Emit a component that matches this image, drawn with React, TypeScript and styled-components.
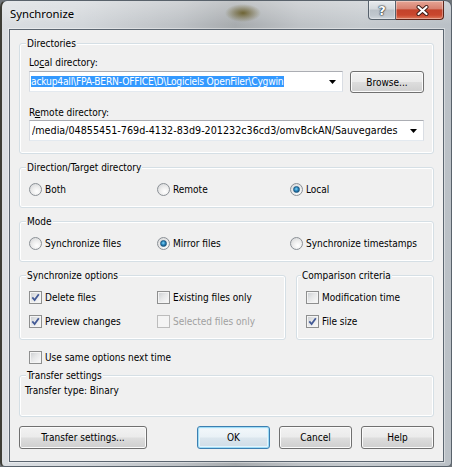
import React from "react";
import styled, { createGlobalStyle } from "styled-components";

const Global = createGlobalStyle`
  html, body { margin: 0; padding: 0; background: #6f7479; }
  body { font-family: "DejaVu Sans Condensed", "DejaVu Sans", sans-serif; }
`;

const Window = styled.div`
  box-sizing: border-box;
  width: 452px;
  height: 467px;
  display: flex;
  flex-direction: column;
  border: 1px solid #59626b;
  border-left: 2px solid #3d3d36;
  border-radius: 7px 7px 5px 5px;
  padding: 0 7px 4px 7px;
  background:
    radial-gradient(ellipse 18px 9px at 241px 12px, rgba(92, 78, 18, 0.8), rgba(92, 78, 18, 0) 100%),
    linear-gradient(180deg, rgba(255, 255, 255, 0.3) 0, rgba(255, 255, 255, 0) 24px),
    linear-gradient(90deg, #dadee2 0%, #d2d6da 18%, #bcc0c4 40%, #a7abae 52%, #bec2c6 66%, #c5cace 80%, #bac0c6 100%);
`;

const TitleBar = styled.div`
  flex: none;
  height: 28px;
  display: flex;
  align-items: flex-start;
  padding-left: 1px;
`;

const TitleText = styled.span`
  flex: 1;
  margin-top: 6px;
  font-family: "Noto Sans", "Liberation Sans", sans-serif;
  font-size: 11.3px;
  line-height: 14px;
  color: #000;
  text-shadow: 0 0 6px rgba(255, 255, 255, 0.9);
`;

const CaptionButtons = styled.div`
  display: flex;
`;

const CaptionButton = styled.div<{ $close?: boolean }>`
  box-sizing: border-box;
  height: 19px;
  width: ${(p) => (p.$close ? 48 : 28)}px;
  display: flex;
  align-items: center;
  justify-content: center;
  padding-left: ${(p) => (p.$close ? 5 : 0)}px;
  border: 1px solid ${(p) => (p.$close ? "#5c2419" : "#56616c")};
  border-top: none;
  ${(p) => (p.$close ? "border-left: none;" : "")}
  border-radius: ${(p) => (p.$close ? "0 0 4px 0" : "0 0 0 4px")};
  box-shadow: inset 0 0 0 1px rgba(255, 255, 255, 0.35);
  background: ${(p) =>
    p.$close
      ? "linear-gradient(180deg, #e6a595 0%, #d88170 42%, #c3432b 50%, #c9472e 78%, #de7a5c 100%)"
      : "linear-gradient(180deg, #e8ebee 0%, #d3d8dc 45%, #b9c0c7 50%, #c0c7ce 80%, #cfd5db 100%)"};
`;

const HelpGlyph = styled.span`
  font-family: "DejaVu Sans", sans-serif;
  font-weight: bold;
  font-size: 13px;
  line-height: 13px;
  color: #fff;
  text-shadow: 0 0 1px #1d2730, 0 0 1px #1d2730, 0 0 2px #1d2730;
`;

const Client = styled.div`
  flex: 1;
  display: flex;
  flex-direction: column;
  background: #f0f0f0;
  border: 1px solid #5b6570;
  box-shadow: 0 0 0 1px rgba(255, 255, 255, 0.4);
  padding: 7px 9px 0 9px;
  color: #000;
  font-family: "DejaVu Sans Condensed", "DejaVu Sans", sans-serif;
  font-stretch: condensed;
  font-size: 10px;
  line-height: 13px;
`;

const Group = styled.section<{ $mt?: number }>`
  display: flex;
  flex-direction: column;
  margin-top: ${(p) => p.$mt ?? 0}px;
  min-width: 0;
`;

const Caption = styled.div<{ $inset?: number }>`
  align-self: flex-start;
  position: relative;
  z-index: 1;
  margin: 0 0 -7px ${(p) => p.$inset ?? 7}px;
  padding: 0 1px;
  line-height: 13px;
  background: #f0f0f0;
`;

const Frame = styled.div<{ $pad: string }>`
  border: 1px solid #d5dfe5;
  border-radius: 3px;
  box-shadow: inset 0 0 0 1px #fff;
  padding: ${(p) => p.$pad};
`;

const FieldLabel = styled.div<{ $mt?: number; $mb?: number }>`
  margin: ${(p) => p.$mt ?? 0}px 0 ${(p) => p.$mb ?? 0}px 0;
  line-height: 13px;
`;

const Mnemonic = styled.span`
  text-decoration: underline;
`;

const ComboRow = styled.div`
  display: flex;
  align-items: flex-start;
  gap: 7px;
`;

const Combo = styled.div<{ $padLeft?: number }>`
  box-sizing: border-box;
  flex: 1;
  min-width: 0;
  height: 21px;
  display: flex;
  align-items: center;
  background: #fff;
  border: 1px solid;
  border-color: #abadb3 #d9dde3 #e3e9ef #d9dde3;
  padding-left: ${(p) => p.$padLeft ?? 1}px;
`;

const ComboText = styled.div<{ $size: number; $tracking?: number }>`
  flex: 1;
  min-width: 0;
  overflow: hidden;
  white-space: nowrap;
  font-size: ${(p) => p.$size}px;
  letter-spacing: ${(p) => p.$tracking ?? 0}px;
  line-height: 13px;
`;

const Selection = styled.span`
  background: #3399ff;
  color: #fff;
  padding: 0 1px 0 0;
`;

const DropArrow = styled.svg`
  flex: none;
  width: 7px;
  height: 4px;
  margin: 0 6px 0 5px;
`;

const Button = styled.button<{ $w: number; $h?: number; $default?: boolean }>`
  box-sizing: border-box;
  flex: none;
  width: ${(p) => p.$w}px;
  height: ${(p) => p.$h ?? 23}px;
  margin: 0;
  padding: 0;
  font: inherit;
  font-stretch: condensed;
  color: #000;
  border: 1px solid ${(p) => (p.$default ? "#3c7fb1" : "#707070")};
  border-radius: 3px;
  box-shadow: ${(p) =>
    p.$default
      ? "inset 0 0 0 1px #9fdcf6, inset 0 0 0 2px #e4f4fc"
      : "inset 0 0 0 1px #fbfbfb"};
  background: ${(p) =>
    p.$default
      ? "linear-gradient(180deg, #f3f8fb 0%, #e9f1f6 48%, #dbe6ee 52%, #cfdce6 100%)"
      : "linear-gradient(180deg, #f2f2f2 0%, #ebebeb 48%, #dddddd 52%, #cfcfcf 100%)"};
`;

const Choices = styled.div<{ $cols: string; $rowGap?: number }>`
  display: grid;
  grid-template-columns: ${(p) => p.$cols};
  row-gap: ${(p) => p.$rowGap ?? 0}px;
`;

const Option = styled.div<{ $disabled?: boolean; $ml?: number }>`
  display: flex;
  align-items: center;
  gap: 3px;
  height: 13px;
  line-height: 13px;
  white-space: nowrap;
  margin-left: ${(p) => p.$ml ?? 0}px;
  color: ${(p) => (p.$disabled ? "#a0a0a0" : "#000")};
`;

const RadioCircle = styled.span<{ $on?: boolean }>`
  box-sizing: border-box;
  flex: none;
  width: 13px;
  height: 13px;
  border-radius: 50%;
  border: 1px solid #8b9096;
  background: radial-gradient(circle at 62% 68%, #ffffff 0%, #ededed 45%, #cfd1d3 100%);
  display: flex;
  align-items: center;
  justify-content: center;
  &::after {
    content: "";
    display: ${(p) => (p.$on ? "block" : "none")};
    box-sizing: border-box;
    width: 7px;
    height: 7px;
    border-radius: 50%;
    border: 1px solid #1f5a83;
    background: radial-gradient(circle at 45% 40%, #8ad6f4 0%, #2f8fc6 40%, #0e4470 90%);
  }
`;

const CheckBox = styled.span<{ $disabled?: boolean }>`
  box-sizing: border-box;
  flex: none;
  width: 13px;
  height: 13px;
  display: flex;
  align-items: center;
  justify-content: center;
  border: 1px solid ${(p) => (p.$disabled ? "#bcbcbc" : "#8e8f8f")};
  box-shadow: inset 0 0 0 1px #f4f4f4;
  background: ${(p) =>
    p.$disabled ? "#f4f4f4" : "linear-gradient(135deg, #c9cccf 0%, #e6e7e8 45%, #fbfbfb 100%)"};
`;

const OptionsRow = styled.div`
  display: grid;
  grid-template-columns: 267px 1fr;
  column-gap: 10px;
  margin-top: 7px;
`;

const Column = styled.div`
  display: flex;
  flex-direction: column;
  row-gap: 11px;
`;

const ButtonRow = styled.div`
  display: flex;
  margin-top: 9px;
  gap: 9px;
`;

const Spacer = styled.div`
  flex: 1;
`;

function Arrow() {
  return (
    <DropArrow viewBox="0 0 7 4">
      <polygon points="0,0 7,0 3.5,4" fill="#000" />
    </DropArrow>
  );
}

function CloseGlyph() {
  return (
    <svg width="13" height="11" viewBox="0 0 13 11">
      <path d="M2.5 2 L10.5 9 M10.5 2 L2.5 9" stroke="#3a1a14" strokeWidth="4" strokeLinecap="round" />
      <path d="M2.5 2 L10.5 9 M10.5 2 L2.5 9" stroke="#ffffff" strokeWidth="2.2" strokeLinecap="round" />
    </svg>
  );
}

function Radio({ label, on }: { label: string; on?: boolean }) {
  return (
    <Option>
      <RadioCircle $on={on} />
      <span>{label}</span>
    </Option>
  );
}

function Check({
  label,
  on,
  disabled,
  ml,
}: {
  label: string;
  on?: boolean;
  disabled?: boolean;
  ml?: number;
}) {
  return (
    <Option $disabled={disabled} $ml={ml}>
      <CheckBox $disabled={disabled}>
        {on && (
          <svg width="9" height="9" viewBox="0 0 9 9">
            <path d="M1.3 4.4 L3.6 7 L7.8 1.3" fill="none" stroke="#435a96" strokeWidth="1.8" />
          </svg>
        )}
      </CheckBox>
      <span>{label}</span>
    </Option>
  );
}

export default function App() {
  return (
    <>
      <Global />
      <Window>
        <TitleBar>
          <TitleText>Synchronize</TitleText>
          <CaptionButtons>
            <CaptionButton>
              <HelpGlyph>?</HelpGlyph>
            </CaptionButton>
            <CaptionButton $close>
              <CloseGlyph />
            </CaptionButton>
          </CaptionButtons>
        </TitleBar>

        <Client>
          <Group>
            <Caption>Directories</Caption>
            <Frame $pad="12px 9px 12px 9px">
              <FieldLabel $mb={2}>
                Lo<Mnemonic>c</Mnemonic>al directory:
              </FieldLabel>
              <ComboRow>
                <Combo>
                  <ComboText $size={10.2} $tracking={-0.2}>
                    <Selection>ackup4all\FPA-BERN-OFFICE\D\Logiciels OpenFiler\Cygwin</Selection>
                  </ComboText>
                  <Arrow />
                </Combo>
                <Button $w={74} $h={22}>
                  Browse...
                </Button>
              </ComboRow>
              <FieldLabel $mt={13} $mb={1}>
                R<Mnemonic>e</Mnemonic>mote directory:
              </FieldLabel>
              <Combo $padLeft={2}>
                <ComboText $size={10.7}>/media/04855451-769d-4132-83d9-201232c36cd3/omvBckAN/Sauvegardes</ComboText>
                <Arrow />
              </Combo>
            </Frame>
          </Group>

          <Group $mt={7}>
            <Caption>Direction/Target directory</Caption>
            <Frame $pad="15px 9px 11px 9px">
              <Choices $cols="128px 133px auto">
                <Radio label="Both" />
                <Radio label="Remote" />
                <Radio label="Local" on />
              </Choices>
            </Frame>
          </Group>

          <Group $mt={7}>
            <Caption>Mode</Caption>
            <Frame $pad="15px 9px 11px 9px">
              <Choices $cols="128px 133px auto">
                <Radio label="Synchronize files" />
                <Radio label="Mirror files" on />
                <Radio label="Synchronize timestamps" />
              </Choices>
            </Frame>
          </Group>

          <OptionsRow>
            <Group>
              <Caption>Synchronize options</Caption>
              <Frame $pad="15px 9px 11px 9px">
                <Choices $cols="128px auto" $rowGap={11}>
                  <Check label="Delete files" on />
                  <Check label="Existing files only" />
                  <Check label="Preview changes" on />
                  <Check label="Selected files only" disabled />
                </Choices>
              </Frame>
            </Group>
            <Group>
              <Caption $inset={5}>Comparison criteria</Caption>
              <Frame $pad="15px 9px 11px 9px">
                <Column>
                  <Check label="Modification time" />
                  <Check label="File size" on />
                </Column>
              </Frame>
            </Group>
          </OptionsRow>

          <Group $mt={11}>
            <Check label="Use same options next time" ml={10} />
          </Group>

          <Group $mt={5}>
            <Caption>Transfer settings</Caption>
            <Frame $pad="8px 5px 19px 5px">
              <FieldLabel>Transfer type: Binary</FieldLabel>
            </Frame>
          </Group>

          <ButtonRow>
            <Button $w={128}>Transfer settings...</Button>
            <Spacer />
            <Button $w={73} $default>
              OK
            </Button>
            <Button $w={73}>Cancel</Button>
            <Button $w={73}>Help</Button>
          </ButtonRow>
        </Client>
      </Window>
    </>
  );
}
